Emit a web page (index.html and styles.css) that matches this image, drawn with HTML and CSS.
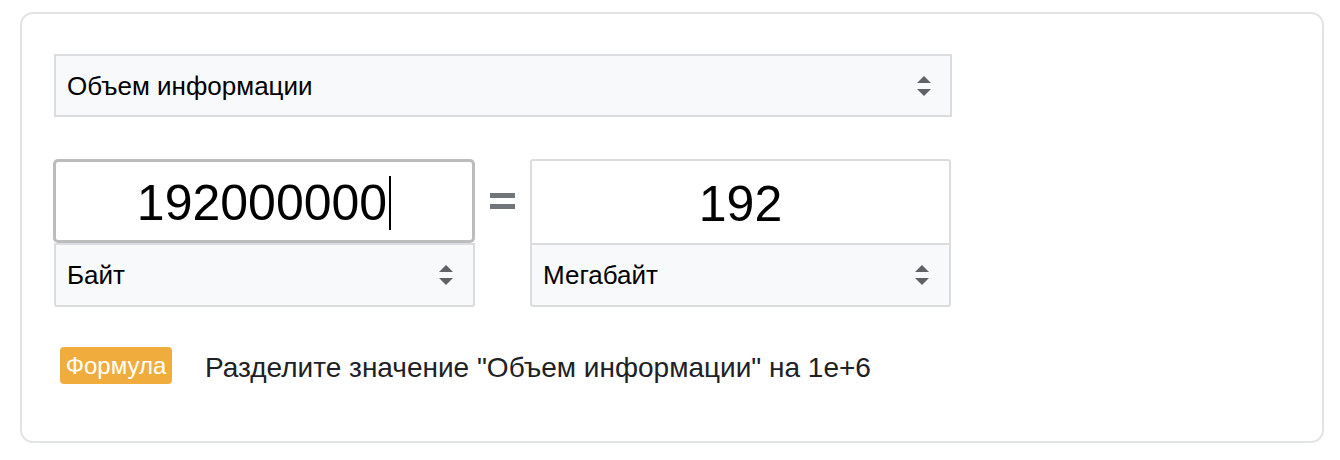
FILE: index.html
```html
<!DOCTYPE html>
<html lang="ru">
<head>
<meta charset="utf-8">
<title>Конвертер</title>
<link rel="stylesheet" href="styles.css">
</head>
<body>
<div class="card">
  <div class="select select-main">
    <span class="select-label">Объем информации</span>
    <svg class="arrows" width="14" height="20" viewBox="0 0 14 20"><polygon points="7,0 14,7 0,7"/><polygon points="0,13 14,13 7,20"/></svg>
  </div>
  <div class="convert-row">
    <div class="unit-col">
      <div class="value-box focused"><span class="value">192000000</span><span class="caret"></span></div>
      <div class="select select-unit">
        <span class="select-label">Байт</span>
        <svg class="arrows" width="14" height="20" viewBox="0 0 14 20"><polygon points="7,0 14,7 0,7"/><polygon points="0,13 14,13 7,20"/></svg>
      </div>
    </div>
    <div class="equals"><span class="bar"></span><span class="bar"></span></div>
    <div class="unit-col">
      <div class="value-box"><span class="value">192</span></div>
      <div class="select select-unit">
        <span class="select-label">Мегабайт</span>
        <svg class="arrows" width="14" height="20" viewBox="0 0 14 20"><polygon points="7,0 14,7 0,7"/><polygon points="0,13 14,13 7,20"/></svg>
      </div>
    </div>
  </div>
  <div class="formula-row">
    <span class="badge">Формула</span>
    <span class="formula-text">Разделите значение "Объем информации" на 1e+6</span>
  </div>
</div>
</body>
</html>
```
FILE: styles.css
```css
html, body {
  margin: 0;
  padding: 0;
  background: #ffffff;
}
body {
  font-family: "Liberation Sans", Arial, sans-serif;
  color: #000000;
  padding: 12px 0 0 20px;
}
.card {
  box-sizing: border-box;
  width: 1304px;
  height: 431px;
  border: 2px solid #e2e3e7;
  border-radius: 13px;
  padding: 40px 0 0 32px;
}
.select {
  box-sizing: border-box;
  display: flex;
  align-items: center;
  justify-content: space-between;
  background: #f8f9fa;
  border: 2px solid #dadce0;
  padding: 0 19px 0 11px;
}
.select-main {
  width: 898px;
  height: 63px;
}
.select-label {
  font-size: 26px;
  line-height: 30px;
  color: #000;
}
.arrows {
  display: block;
  fill: #5f6368;
}
.select-main .arrows {
  margin-top: 1px;
}
.convert-row {
  display: flex;
  margin-top: 42px;
}
.unit-col {
  width: 421px;
  display: flex;
  flex-direction: column;
}
.value-box {
  box-sizing: border-box;
  height: 84px;
  border: 2px solid #dadce0;
  border-bottom: none;
  border-radius: 3px 3px 0 0;
  display: flex;
  align-items: center;
  justify-content: center;
}
.value-box.focused {
  border: 3px solid #bcbcbc;
  border-radius: 5px;
  margin-left: -1px;
}
.value {
  font-size: 50px;
  line-height: 56px;
  color: #000;
  padding-top: 3px;
}
.caret {
  display: inline-block;
  width: 2px;
  height: 54px;
  background: #000;
  margin-left: 2px;
  margin-top: 3px;
}
.select-unit {
  height: 64px;
  border-radius: 0 0 3px 3px;
  padding-right: 20px;
}
.equals {
  width: 55px;
  height: 84px;
  display: flex;
  flex-direction: column;
  align-items: center;
  justify-content: center;
  gap: 6px;
}
.bar {
  display: block;
  width: 25px;
  height: 5px;
  background: #70757a;
}
.formula-row {
  display: flex;
  align-items: center;
  margin-top: 40px;
  padding-left: 6px;
}
.badge {
  box-sizing: border-box;
  width: 112px;
  height: 37px;
  background: #f0ad3e;
  color: #ffffff;
  border-radius: 4px;
  font-size: 24px;
  line-height: 37px;
  text-align: center;
}
.formula-text {
  margin-left: 33px;
  font-size: 28px;
  color: #202124;
  padding-top: 4px;
}
```
